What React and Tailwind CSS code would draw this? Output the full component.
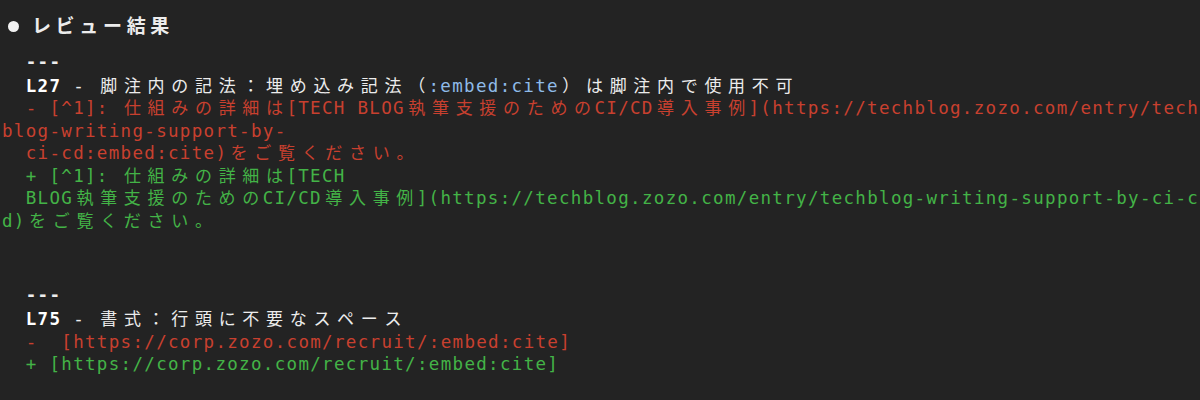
import React from 'react';

const WIDE = /[\u3000-\u30ff\u4e00-\u9fff\uff00-\uffef]/;

// terminal cells: ascii = 1 cell, CJK = 2 cells
const Cells = ({ text, big }) => {
    const out = [];
    let buf = '';
    let k = 0;
    for (const ch of text) {
        if (WIDE.test(ch)) {
            if (buf) { out.push(<span key={k++}>{buf}</span>); buf = ''; }
            out.push(
                <span key={k++} className={big ? "inline-block w-[23.7px] text-center tracking-normal text-[19px]" : "inline-block w-[23.7px] text-center tracking-normal text-[17px]"}>{ch}</span>
            );
        } else {
            buf += ch;
        }
    }
    if (buf) out.push(<span key={k++}>{buf}</span>);
    return out;
};

const Line = ({ parts, tall }) => (
    <div className={tall ? "h-[24px] leading-[22.5px] whitespace-pre" : "h-[22.5px] leading-[22.5px] whitespace-pre"}>
        {parts.map(([t, cls], i) => (
            <span key={i} className={cls}>
                <Cells text={t} />
            </span>
        ))}
    </div>
);

const RED = 'text-[#c8402f]';
const GREEN = 'text-[#43b347]';
const WHITE = 'text-[#ececec]';

const App = () => {
    return (
        <div className="w-[1200px] h-[400px] overflow-hidden bg-[#232323] pl-[2px] pt-[14px] text-[17.5px] tracking-[1.32px] text-[#ececec] font-['DejaVu_Sans_Mono','Noto_Sans_CJK_JP',monospace]">
            {/* heading */}
            <div className="h-[22.5px] leading-[22.5px] whitespace-pre font-bold flex items-center mt-[1px]">
                <span className="inline-flex w-[23.6px] justify-center items-center">
                    <span className="block w-[11px] h-[11px] rounded-full bg-[#f2f2f2]"></span>
                </span>
                <span className="w-[4px]"></span>
                <span><Cells text="レビュー結果" big /></span>
            </div>

            <div className="mt-[13px]">
                <Line tall parts={[['  ---', 'font-bold text-[#ececec]']]} />
                <Line parts={[['  ', WHITE], ['L27', 'font-bold text-white'], [' - 脚注内の記法：埋め込み記法（', WHITE], [':embed:cite', 'text-[#8fbbe8]'], ['）は脚注内で使用不可', WHITE]]} />
                <Line parts={[['  - [^1]: 仕組みの詳細は[TECH BLOG執筆支援のためのCI/CD導入事例](https://techblog.zozo.com/entry/tech', RED]]} />
                <Line parts={[['blog-writing-support-by-', RED]]} />
                <Line parts={[['  ci-cd:embed:cite)をご覧ください。', RED]]} />
                <Line parts={[['  + [^1]: 仕組みの詳細は[TECH', GREEN]]} />
                <Line parts={[['  BLOG執筆支援のためのCI/CD導入事例](https://techblog.zozo.com/entry/techblog-writing-support-by-ci-c', GREEN]]} />
                <Line parts={[['d)をご覧ください。', GREEN]]} />
            </div>

            <div className="mt-[52px]">
                <Line tall parts={[['  ---', 'font-bold text-[#ececec]']]} />
                <Line parts={[['  ', WHITE], ['L75', 'font-bold text-white'], [' - 書式：行頭に不要なスペース', WHITE]]} />
                <Line parts={[['  -  [https://corp.zozo.com/recruit/:embed:cite]', RED]]} />
                <Line parts={[['  + [https://corp.zozo.com/recruit/:embed:cite]', GREEN]]} />
            </div>
        </div>
    );
};

export default App;
